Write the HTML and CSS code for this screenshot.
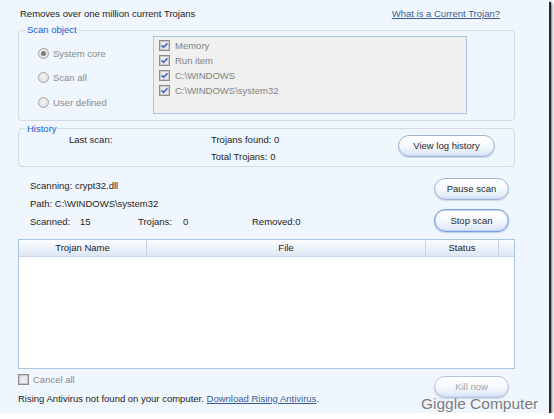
FILE: index.html
```html
<!DOCTYPE html>
<html>
<head>
<meta charset="utf-8">
<link rel="stylesheet" href="styles.css">
</head>
<body>
<div class="window">
  <div class="topbar">
    <span class="title">Removes over one million current Trojans</span>
    <a class="link" href="#">What is a Current Trojan?</a>
  </div>

  <fieldset class="group scan">
    <legend>Scan object</legend>
    <div class="scan-body">
      <div class="radios">
        <div class="radio"><span class="rb checked"></span>System core</div>
        <div class="radio"><span class="rb"></span>Scan all</div>
        <div class="radio"><span class="rb"></span>User defined</div>
      </div>
      <div class="listbox">
        <div class="item"><span class="cb"><svg viewBox="0 0 9 9"><path d="M1.6 4.4 L3.6 6.4 L7.4 2.4"/></svg></span>Memory</div>
        <div class="item"><span class="cb"><svg viewBox="0 0 9 9"><path d="M1.6 4.4 L3.6 6.4 L7.4 2.4"/></svg></span>Run item</div>
        <div class="item"><span class="cb"><svg viewBox="0 0 9 9"><path d="M1.6 4.4 L3.6 6.4 L7.4 2.4"/></svg></span>C:\WINDOWS</div>
        <div class="item"><span class="cb"><svg viewBox="0 0 9 9"><path d="M1.6 4.4 L3.6 6.4 L7.4 2.4"/></svg></span>C:\WINDOWS\system32</div>
      </div>
    </div>
  </fieldset>

  <fieldset class="group history">
    <legend>History</legend>
    <div class="hist-body">
      <div class="hist-left">Last scan:</div>
      <div class="hist-mid">
        <div>Trojans found: 0</div>
        <div>Total Trojans: 0</div>
      </div>
      <button class="btn btn-view">View log history</button>
    </div>
  </fieldset>

  <div class="status">
    <div class="status-text">
      <div>Scanning: crypt32.dll</div>
      <div>Path: C:\WINDOWS\system32</div>
      <div class="counts">
        <span class="k1">Scanned:</span><span class="v1">15</span>
        <span class="k2">Trojans:</span><span class="v2">0</span>
        <span>Removed:0</span>
      </div>
    </div>
    <div class="status-btns">
      <button class="btn btn-pause">Pause scan</button>
      <button class="btn btn-stop">Stop scan</button>
    </div>
  </div>

  <div class="table">
    <div class="thead">
      <div class="th c1">Trojan Name</div>
      <div class="th c2">File</div>
      <div class="th c3">Status</div>
      <div class="th c4"></div>
    </div>
  </div>

  <div class="footer">
    <div class="foot-left">
      <div class="cancel"><span class="cb off"></span>Cancel all</div>
      <div class="rising">Rising Antivirus not found on your computer. <a class="link" href="#">Download Rising Antivirus</a>.</div>
    </div>
    <button class="btn btn-kill" disabled>Kill now</button>
  </div>

  <div class="watermark">Giggle Computer</div>
</div>
</body>
</html>
```

FILE: styles.css
```css
* { box-sizing: border-box; }
html, body { margin: 0; padding: 0; background: #ffffff; }
body {
  font-family: "Liberation Sans", Arial, sans-serif;
  font-size: 9.5px;
  color: #1e1e1e;
}
.window {
  position: relative;
  width: 549px;
  height: 413px;
  background: #eff6fd;
  box-shadow: 2px 2px 1px #2a2a2a, 3px 3px 3px rgba(0, 0, 0, 0.5);
  padding: 8px 34px 0 18px;
}
.topbar {
  display: flex;
  justify-content: space-between;
  line-height: 12px;
  height: 12px;
  padding: 0 15px 0 2px;
}
.link { color: #3b5c95; text-decoration: underline; }

.group {
  margin: 4px 0 0;
  padding: 0;
  width: 497px;
  min-width: 0;
  border: 1px solid #d2d9e2;
  border-radius: 4px;
}
.group legend {
  margin-left: 7px;
  padding: 0 1px;
  line-height: 12px;
  color: #1461d6;
}
.scan-body { display: flex; padding: 0 0 5px 19px; }
.radios { width: 115px; padding-top: 5px; }
.radio {
  display: flex;
  align-items: center;
  gap: 4px;
  height: 24.5px;
  color: #8a8a8a;
}
.rb {
  width: 11px; height: 11px;
  border-radius: 50%;
  border: 1px solid #a3a3a3;
  background: radial-gradient(circle at 50% 40%, #f4f4f4, #d9d9d9);
  display: flex; align-items: center; justify-content: center;
}
.rb.checked::after {
  content: "";
  width: 5px; height: 5px;
  border-radius: 50%;
  background: #7e7e7e;
}
.listbox {
  width: 314px;
  height: 78px;
  border: 1px solid #a9c6e6;
  background: #f0f0f0;
  padding: 1px 0 0 5px;
}
.item {
  display: flex;
  align-items: center;
  gap: 5px;
  height: 15px;
  color: #828282;
}
.cb {
  width: 11px; height: 11px;
  border: 1px solid #8c8c8c;
  box-shadow: inset 0 0 0 1px #c9c9c9;
  background: #ececec;
  display: flex; align-items: center; justify-content: center;
  flex: none;
}
.cb svg { width: 9px; height: 9px; }
.cb path { fill: none; stroke: #3f6dc6; stroke-width: 1.7; }
.cb.off { background: linear-gradient(#e2e2e2, #f2f2f2); }

.history { margin-top: 2px; }
.hist-body {
  display: flex;
  align-items: flex-start;
  line-height: 17px;
  margin-top: -4px;
  padding-bottom: 1px;
}
.hist-left { margin-left: 50px; width: 142px; }
.hist-mid { width: 187px; }
.btn {
  font: inherit;
  color: #2b2b2b;
  padding: 0;
  border: 1px solid #9fb5d6;
  border-radius: 11px;
  background: linear-gradient(#ffffff 0%, #f6f9fe 50%, #e2ebf8 85%, #d6e2f4 100%);
  box-shadow: inset 0 -1px 1px #c9d8ef, 0 1px 1px rgba(140, 165, 205, 0.35);
}
.btn-view { margin-top: 4px; width: 97px; height: 22px; }

.status {
  display: flex;
  justify-content: space-between;
  margin-top: 10px;
  padding: 0 6px 0 12px;
}
.status-text { line-height: 18px; }
.counts { display: flex; }
.k1 { width: 50px; }
.v1 { width: 58px; }
.k2 { width: 45px; }
.v2 { width: 69px; }
.status-btns { display: flex; flex-direction: column; gap: 9px; padding-top: 1px; }
.btn-pause { width: 75px; height: 22px; }
.btn-stop {
  width: 75px; height: 23px;
  border-color: #7d9be0;
  box-shadow: inset 0 0 0 1px #c3d4f3, 0 1px 1px rgba(120, 150, 210, 0.4);
}

.table {
  margin-top: 7px;
  height: 130px;
  border: 1px solid #a9c6e6;
  background: #ffffff;
}
.thead {
  display: flex;
  height: 17px;
  background: linear-gradient(#fcfdff, #e9f0f9 60%, #dde7f4);
  border-bottom: 1px solid #c6d6eb;
}
.th {
  text-align: center;
  line-height: 16px;
  border-right: 1px solid #c6d5ea;
  color: #1e1e1e;
}
.c1 { width: 128px; }
.c2 { width: 279px; }
.c3 { width: 73px; }
.c4 { flex: 1; border-right: none; }

.footer {
  display: flex;
  justify-content: space-between;
  margin-top: 5px;
  padding-right: 6px;
}
.cancel {
  display: flex;
  align-items: center;
  gap: 4px;
  height: 11px;
  color: #8a8a8a;
}
.rising { margin-top: 8px; line-height: 12px; }
.btn-kill {
  margin-top: 2px;
  width: 75px; height: 22px;
  color: #a2a2a2;
  border-color: #b3c4de;
}
.watermark {
  position: absolute;
  left: 421px;
  top: 395px;
  font-size: 15.5px;
  line-height: 18px;
  color: #7a7a7a;
  text-shadow: 0 0 1px #ffffff, 0 0 1px #ffffff;
}
```
